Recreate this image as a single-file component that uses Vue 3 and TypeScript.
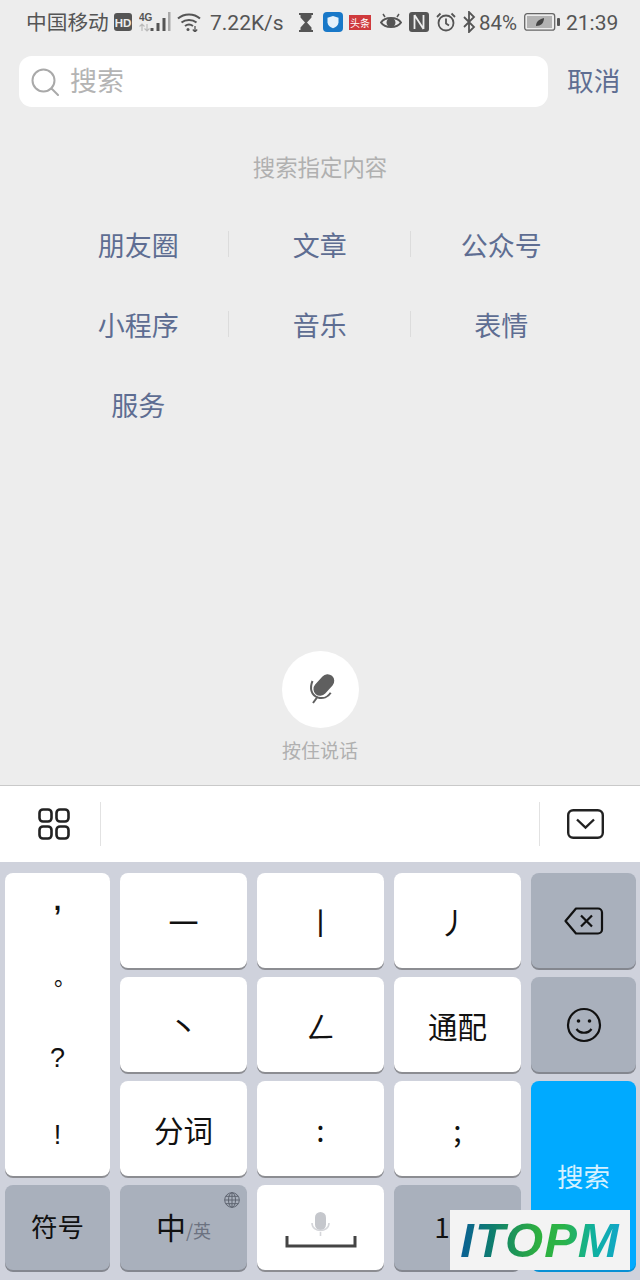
<script setup lang="ts">
const cats: string[] = ['朋友圈', '文章', '公众号', '小程序', '音乐', '表情', '服务']
</script>

<template>
  <div class="page">
    <div class="status">
      <span class="st carrier">中国移动</span>
      <svg class="i hd" width="18" height="18" viewBox="0 0 18 18"><rect width="18" height="18" rx="3" fill="#555"/><text x="9" y="13.500" text-anchor="middle" font-size="11.500" font-weight="700" fill="#ededed" font-family="Liberation Sans, sans-serif">HD</text></svg>
      <svg class="i sig" width="32" height="20" viewBox="0 0 32 20"><text x="0" y="8.500" font-size="10" font-weight="700" fill="#555" font-family="Liberation Sans, sans-serif">4G</text><path d="M3 12v7M0.500 14.500 3 12l2.500 2.500M8 12v7M5.500 16.500 8 19l2.500-2.500" stroke="#bbb" stroke-width="1.200" fill="none"/><rect x="11.500" y="16" width="3" height="3" fill="#555"/><rect x="17.500" y="11" width="3" height="8" fill="#555"/><rect x="23.500" y="6" width="3" height="13" fill="#555"/><rect x="29" y="0" width="2.500" height="19" fill="#aaa"/></svg>
      <svg class="i wifi" width="24" height="20" viewBox="0 0 24 20" fill="none" stroke="#555" stroke-width="2"><path d="M1 6.500C7 1 17 1 23 6.500"/><path d="M4.500 10.500C8.500 7 15.500 7 19.500 10.500"/><path d="M8 14c2.500-1.800 5.500-1.800 8 0"/><circle cx="11" cy="17.500" r="1.500" fill="#555" stroke="none"/><path d="M18 14v6M15.800 17.500 18 20l2.200-2.500" stroke-width="1.300"/></svg>
      <span class="st speed">7.22K/s</span>
      <svg class="i glass" width="16" height="19" viewBox="0 0 16 19"><path d="M1 0h14v2h-1.500v2.500L9 9.500l4.500 5V17H15v2H1v-2h1.500v-2.500l4.500-5-4.500-5V2H1z" fill="#555"/></svg>
      <svg class="i shield" width="20" height="20" viewBox="0 0 20 20"><rect width="20" height="20" rx="4" fill="#1878c8"/><path d="M10 4l5.500 1.800v4.500c0 3-2.500 5-5.500 6-3-1-5.500-3-5.500-6V5.800z" fill="#e4f1fb"/></svg>
      <span class="toutiao">头条</span>
      <svg class="i eye" width="22" height="18" viewBox="0 0 22 18" fill="none" stroke="#555" stroke-width="2"><path d="M1 9.500C5 3.500 17 3.500 21 9.500 17 15.500 5 15.500 1 9.500z"/><circle cx="11" cy="9.500" r="3.500" fill="#555"/><path d="M3 1l2 3M19 1l-2 3" stroke-width="1.500"/></svg>
      <svg class="i nfc" width="20" height="20" viewBox="0 0 20 20"><rect width="20" height="20" rx="3" fill="#555"/><path d="M5.500 3v14M14.500 3v14M5.500 3l9 14" stroke="#ededed" stroke-width="1.800" fill="none"/></svg>
      <svg class="i alarm" width="20" height="20" viewBox="0 0 20 20" fill="none" stroke="#555" stroke-width="1.800"><circle cx="10" cy="11" r="7.500"/><path d="M10 6.500V11.500L13 13.500M1 5l3.500-3.500M19 5l-3.500-3.500"/></svg>
      <svg class="i bt" width="14" height="22" viewBox="0 0 14 22" fill="none" stroke="#555" stroke-width="1.800"><path d="M2 6l10 10-5 5V1l5 5L2 16"/></svg>
      <span class="st pct">84%</span>
      <svg class="i batt" width="36" height="18" viewBox="0 0 36 18"><rect x="0.700" y="0.700" width="30" height="16.500" rx="2.500" fill="none" stroke="#666" stroke-width="1.300"/><rect x="3" y="3" width="25" height="12" fill="#b3b3b3"/><rect x="33" y="5" width="3" height="8" rx="1" fill="#555"/><path d="M12 13c0-5 4-7 8-8 0 5-3 8-8 8z" fill="#444"/></svg>
      <span class="st time">21:39</span>
    </div>

    <div class="search-row">
      <div class="search-box">
        <svg width="28" height="28" viewBox="0 0 28 28" fill="none" stroke="#a9a9a9" stroke-width="2"><circle cx="12.500" cy="12.500" r="11"/><path d="M20.500 20.500 27 27" stroke-linecap="round"/></svg>
        <span class="placeholder">搜索</span>
      </div>
      <span class="cancel">取消</span>
    </div>

    <div class="title">搜索指定内容</div>

    <div class="cats">
      <div v-for="(c, i) in cats" :key="c" class="cat">
        <span>{{ c }}</span>
        <i v-if="i === 0 || i === 1 || i === 3 || i === 4" class="cat-sep"></i>
      </div>
    </div>

    <div class="voice">
      <div class="mic-circle">
        <svg width="44" height="44" viewBox="0 0 44 44" fill="none"><path d="M22.200 21.100 29.500 12.900" stroke="#5f5f5f" stroke-width="13.500" stroke-linecap="round"/><path d="M14.500 13C11.500 20 13 27 20 29.500c5 1.500 10-.5 12.700-4.800M19 29.500 15 35" stroke="#5f5f5f" stroke-width="2"/></svg>
      </div>
      <div class="voice-label">按住说话</div>
    </div>

    <div class="toolbar">
      <div class="tb-left">
        <svg width="32" height="32" viewBox="0 0 32 32" fill="none" stroke="#222" stroke-width="2.600"><rect x="1.500" y="1.500" width="12" height="12" rx="3.500"/><rect x="18.500" y="1.500" width="12" height="12" rx="3.500"/><rect x="1.500" y="18.500" width="12" height="12" rx="3.500"/><rect x="18.500" y="18.500" width="12" height="12" rx="3.500"/></svg>
      </div>
      <div class="tb-mid"></div>
      <div class="tb-right">
        <svg width="37" height="30" viewBox="0 0 37 30" fill="none" stroke="#222" stroke-width="2.400"><rect x="1.200" y="1.200" width="34.600" height="27.600" rx="5"/><path d="M10 10.500l8.500 8 8.500-8"/></svg>
      </div>
    </div>

    <div class="keyboard">
      <div class="key punct">
        <span class="p-comma">,</span>
        <span class="p-dot">。</span>
        <span class="p-q">?</span>
        <span class="p-ex">!</span>
      </div>
      <div class="key stroke">一</div>
      <div class="key stroke">丨</div>
      <div class="key stroke pie">丿</div>
      <div class="key fn">
        <svg width="40" height="28" viewBox="0 0 40 28" fill="none" stroke="#111" stroke-width="2.200"><path d="M12 1.500H34a4 4 0 0 1 4 4v17a4 4 0 0 1-4 4H12L1.500 14z" stroke-linejoin="round"/><path d="M17 8.500l11 11M28 8.500l-11 11"/></svg>
      </div>
      <div class="key stroke">丶</div>
      <div class="key stroke">ㄥ</div>
      <div class="key word">通配</div>
      <div class="key fn">
        <svg width="36" height="36" viewBox="0 0 36 36" fill="none" stroke="#111" stroke-width="2.200"><circle cx="18" cy="18" r="16"/><circle cx="12.500" cy="14" r="1.800" fill="#111" stroke="none"/><circle cx="23.500" cy="14" r="1.800" fill="#111" stroke="none"/><path d="M10.500 22c3.500 5 11.500 5 15 0"/></svg>
      </div>
      <div class="key word">分词</div>
      <div class="key stroke">:</div>
      <div class="key stroke">;</div>
      <div class="key go">搜索</div>
      <div class="key fn label">符号</div>
      <div class="key fn zh">
        <span class="zh-main">中</span><span class="zh-sub">/英</span>
        <svg class="globe" width="16" height="16" viewBox="0 0 16 16" fill="none" stroke="#5e6470" stroke-width="1"><circle cx="8" cy="8" r="7.300"/><ellipse cx="8" cy="8" rx="3.500" ry="7.300"/><path d="M8 .7v14.600M.7 8h14.600M1.800 4.300h12.400M1.800 11.700h12.400"/></svg>
      </div>
      <div class="key space">
        <svg width="72" height="36" viewBox="0 0 72 36" fill="none"><rect x="30" y="0" width="11" height="18" rx="5.500" fill="#c5c7cc"/><path d="M27 11c0 10 17 10 17 0M35.500 20v4" stroke="#d5d6da" stroke-width="1.600"/><path d="M2 24v10h68V24" stroke="#444" stroke-width="3"/></svg>
      </div>
      <div class="key fn label num">123</div>
    </div>

    <div class="logo"><span>ITOPM</span></div>
  </div>
</template>

<style>
body { margin: 0; }
</style>

<style scoped>
.page {
  position: relative;
  width: 640px;
  height: 1280px;
  overflow: hidden;
  background: #ededed;
  display: flex;
  flex-direction: column;
  font-family: "Noto Sans CJK SC", "Noto Sans", sans-serif;
}
.status {
  height: 44px;
  display: flex;
  align-items: center;
  padding-left: 26px;
  color: #555;
  flex: none;
}
.st { font-size: 21px; line-height: 46px; height: 44px; white-space: nowrap; font-family: Roboto, "Noto Sans CJK SC", sans-serif; }
.carrier { font-size: 20.700px; width: 83px; }
.i { flex: none; }
.hd { margin-left: 5px; }
.sig { margin-left: 7px; }
.wifi { margin-left: 6px; }
.speed { margin-left: 9px; width: 75px; }
.glass { margin-left: 13px; }
.shield { margin-left: 9px; }
.toutiao {
  margin-left: 6px;
  width: 22px;
  height: 15px;
  background: #cf3a3d;
  color: #fff;
  font-size: 10px;
  line-height: 15px;
  text-align: center;
  flex: none;
}
.eye { margin-left: 9px; }
.nfc { margin-left: 7px; }
.alarm { margin-left: 7px; }
.bt { margin-left: 6px; }
.pct { margin-left: 3px; width: 38px; font-size: 20.500px; }
.batt { margin-left: 7px; }
.time { margin-left: 6px; }

.search-row {
  margin-top: 12px;
  height: 51px;
  display: flex;
  align-items: center;
  padding-left: 19px;
  flex: none;
}
.search-box {
  width: 529px;
  height: 51px;
  background: #fff;
  border-radius: 13px;
  display: flex;
  align-items: center;
  padding-left: 12px;
  box-sizing: border-box;
}
.placeholder { margin-left: 11px; font-size: 27px; color: #b4b4b4; line-height: 47px; height: 51px; }
.cancel { margin-left: 19px; font-size: 26.700px; color: #5e6d92; line-height: 47px; height: 51px; }
.title {
  margin-top: 43px;
  height: 32px;
  line-height: 32px;
  font-size: 22.400px;
  color: #b0b0b0;
  text-align: center;
  flex: none;
}
.cats {
  margin-top: 22px;
  padding-left: 47.500px;
  display: grid;
  grid-template-columns: repeat(3, 181.500px);
  grid-auto-rows: 80px;
  flex: none;
}
.cat {
  position: relative;
  display: flex;
  align-items: center;
  justify-content: center;
  font-size: 27px;
  color: #5e6d92;
}
.cat-sep {
  position: absolute;
  right: 0;
  top: 27px;
  width: 1px;
  height: 26px;
  background: #dcdcdc;
}
.voice {
  margin-top: auto;
  display: flex;
  flex-direction: column;
  align-items: center;
  flex: none;
  padding-bottom: 22px;
}
.mic-circle {
  width: 77px;
  height: 77px;
  border-radius: 50%;
  background: #fff;
  display: flex;
  align-items: center;
  justify-content: center;
}
.voice-label { margin-top: 9px; font-size: 19px; line-height: 26px; color: #b0b0b0; }
.toolbar {
  height: 77px;
  box-sizing: border-box;
  background: #fff;
  border-top: 1px solid #c9c9c9;
  display: flex;
  align-items: center;
  flex: none;
}
.tb-left { width: 100px; display: flex; justify-content: center; padding-left: 8px; box-sizing: border-box; }
.tb-mid { flex: 1; height: 44px; border-left: 1px solid #e2e2e2; border-right: 1px solid #e2e2e2; }
.tb-right { width: 100px; display: flex; justify-content: center; box-sizing: border-box; padding-right: 10px; }
.keyboard {
  height: 418px;
  box-sizing: border-box;
  background: #cfd2dc;
  padding: 11px 4px 0 5px;
  display: grid;
  grid-template-columns: 105px 127px 127px 127px 105px;
  grid-template-rows: 95px 95px 95px 85px;
  column-gap: 10px;
  row-gap: 9px;
  flex: none;
  font-family: "Noto Sans CJK SC", sans-serif;
}
.key {
  background: #fff;
  border-radius: 8px;
  box-shadow: 0 2px 0 #8c8d92;
  display: flex;
  align-items: center;
  justify-content: center;
  color: #111;
  font-size: 29px;
  position: relative;
}
.word { font-size: 29.500px; }
.stroke { font-size: 30px; }
.pie { padding-right: 8px; box-sizing: border-box; }
.punct {
  grid-row: 1 / span 3;
  grid-column: 1;
  flex-direction: column;
  justify-content: space-around;
  font-size: 27px;
  font-family: "Liberation Sans", "Noto Sans CJK SC", sans-serif;
}
.p-comma { font-weight: 700; margin-top: -12px; }
.p-dot { font-size: 22px; margin-left: 15px; margin-top: -8px; }
.p-q { margin-top: 2px; }
.p-ex { margin-top: -4px; }
.fn { background: #a9b0bc; box-shadow: 0 2px 0 #84878f; }
.label { font-size: 26.500px; padding-bottom: 4px; box-sizing: border-box; }
.num { font-size: 28px; }
.zh { padding-bottom: 4px; box-sizing: border-box; }
.zh-main { font-size: 30px; line-height: 1; }
.zh-sub { font-size: 18px; color: #6c7280; margin-top: 8px; }
.globe { position: absolute; top: 7px; right: 7px; }
.space { padding-top: 4px; box-sizing: border-box; }
.go {
  grid-column: 5;
  grid-row: 3 / span 2;
  background: #00aaff;
  box-shadow: 0 2px 0 #0790d4;
  color: #d5f1ff;
  font-size: 26.500px;
}
.logo {
  position: absolute;
  left: 450px;
  top: 1210px;
  width: 180px;
  height: 60px;
  background: #f3f3f3;
  display: flex;
  align-items: center;
  justify-content: center;
}
.logo span {
  font-family: "Liberation Sans", sans-serif;
  font-weight: 700;
  font-style: italic;
  font-size: 49px;
  letter-spacing: 1px;
  background: linear-gradient(90deg, #0a5f96 0%, #0e7d6e 20%, #2fb13e 50%, #2ab34a 65%, #0fb0a4 85%, #12a6c8 100%);
  -webkit-background-clip: text;
  background-clip: text;
  color: transparent;
}
</style>
